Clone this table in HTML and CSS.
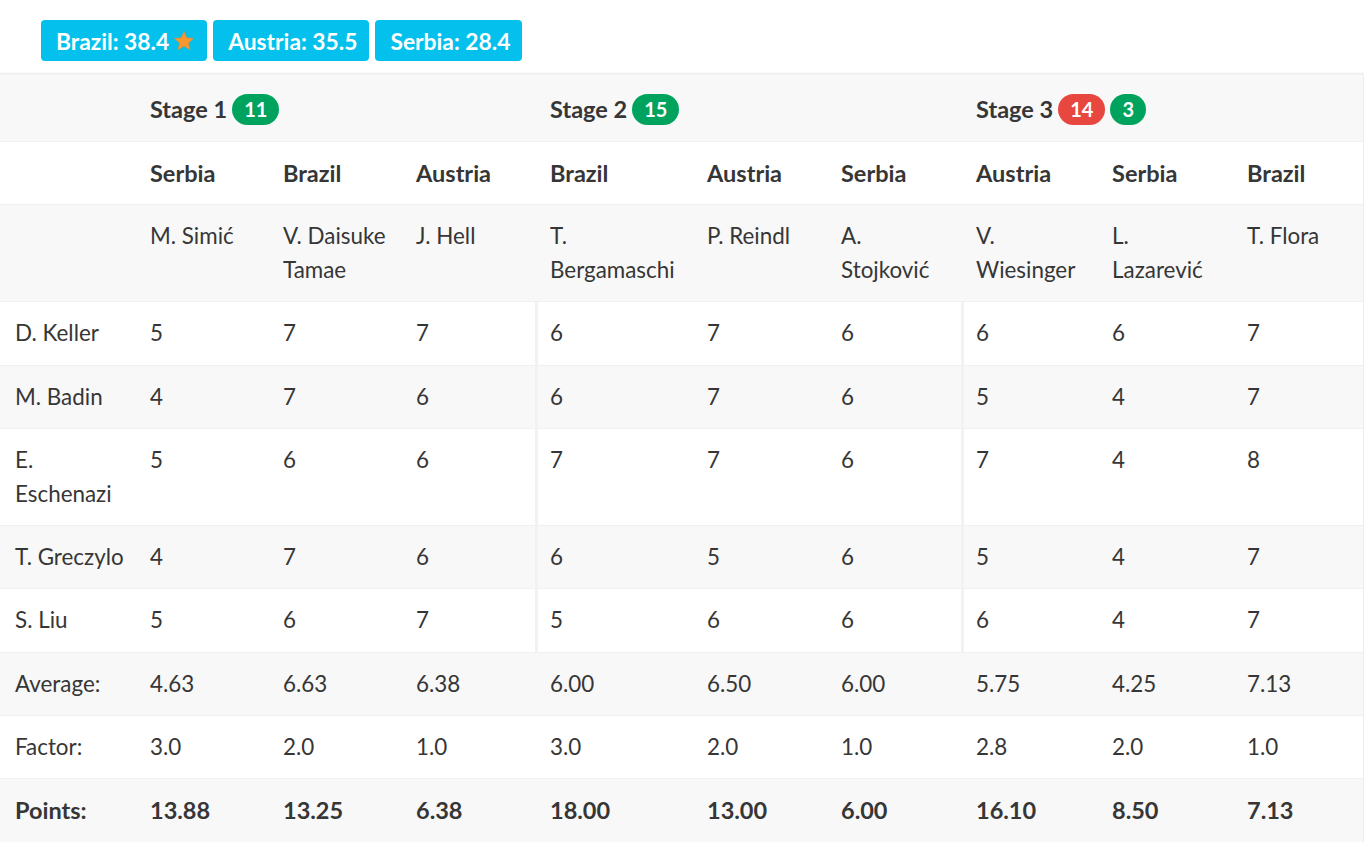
FILE: index.html
```html
<!DOCTYPE html>
<html>
<head>
<meta charset="utf-8">
<link rel="stylesheet" href="styles.css">
</head>
<body>
<div class="page">
  <div class="tags">
    <span class="tag">Brazil: 38.4 <svg class="star" viewBox="0 0 24 24" width="22" height="22"><path d="M12 1.6l3.1 6.9 7.4.7-5.6 5 1.7 7.3L12 17.7l-6.6 3.8 1.7-7.3-5.6-5 7.4-.7z" fill="#f7982f" stroke="#d98a3a" stroke-width="0.6"/></svg></span>
    <span class="tag">Austria: 35.5</span>
    <span class="tag">Serbia: 28.4</span>
  </div>
  <div class="box">
    <table class="scores">
      <colgroup>
        <col class="c135"><col class="c133"><col class="c133"><col class="c134"><col class="c157"><col class="c134"><col class="c135"><col class="c136"><col class="c135"><col class="c131">
      </colgroup>
      <tr class="stage gray">
        <td></td>
        <td colspan="3"><span class="stitle">Stage 1</span><span class="pill green">11</span></td>
        <td colspan="3"><span class="stitle">Stage 2</span><span class="pill green">15</span></td>
        <td colspan="3"><span class="stitle">Stage 3</span><span class="pill red">14</span><span class="pill green">3</span></td>
      </tr>
      <tr class="bold">
        <td></td><td>Serbia</td><td>Brazil</td><td>Austria</td><td>Brazil</td><td>Austria</td><td>Serbia</td><td>Austria</td><td>Serbia</td><td>Brazil</td>
      </tr>
      <tr class="gray">
        <td></td><td>M. Simić</td><td>V. Daisuke<br>Tamae</td><td>J. Hell</td><td>T.<br>Bergamaschi</td><td>P. Reindl</td><td>A.<br>Stojković</td><td>V.<br>Wiesinger</td><td>L.<br>Lazarević</td><td>T. Flora</td>
      </tr>
      <tr class="score">
        <td>D. Keller</td><td>5</td><td>7</td><td>7</td><td class="sep">6</td><td>7</td><td>6</td><td class="sep">6</td><td>6</td><td>7</td>
      </tr>
      <tr class="score gray">
        <td>M. Badin</td><td>4</td><td>7</td><td>6</td><td class="sep">6</td><td>7</td><td>6</td><td class="sep">5</td><td>4</td><td>7</td>
      </tr>
      <tr class="score">
        <td>E.<br>Eschenazi</td><td>5</td><td>6</td><td>6</td><td class="sep">7</td><td>7</td><td>6</td><td class="sep">7</td><td>4</td><td>8</td>
      </tr>
      <tr class="score gray">
        <td>T. Greczylo</td><td>4</td><td>7</td><td>6</td><td class="sep">6</td><td>5</td><td>6</td><td class="sep">5</td><td>4</td><td>7</td>
      </tr>
      <tr class="score">
        <td>S. Liu</td><td>5</td><td>6</td><td>7</td><td class="sep">5</td><td>6</td><td>6</td><td class="sep">6</td><td>4</td><td>7</td>
      </tr>
      <tr class="gray foot">
        <td>Average:</td><td>4.63</td><td>6.63</td><td>6.38</td><td>6.00</td><td>6.50</td><td>6.00</td><td>5.75</td><td>4.25</td><td>7.13</td>
      </tr>
      <tr class="foot">
        <td>Factor:</td><td>3.0</td><td>2.0</td><td>1.0</td><td>3.0</td><td>2.0</td><td>1.0</td><td>2.8</td><td>2.0</td><td>1.0</td>
      </tr>
      <tr class="gray bold foot last">
        <td>Points:</td><td>13.88</td><td>13.25</td><td>6.38</td><td>18.00</td><td>13.00</td><td>6.00</td><td>16.10</td><td>8.50</td><td>7.13</td>
      </tr>
    </table>
  </div>
</div>
</body>
</html>
```
FILE: styles.css
```css
html, body {
  margin: 0;
  padding: 0;
  background: #ffffff;
}
body {
  font-family: Lato, "Noto Sans", sans-serif;
  color: #363636;
  font-size: 22.4px;
}
.page {
  width: 1364px;
}
.tags {
  display: flex;
  gap: 6px;
  padding: 20px 0 0 41px;
  height: 41px;
  margin-bottom: 12px;
}
.tag {
  display: inline-flex;
  align-items: center;
  gap: 4px;
  height: 41px;
  padding: 0 12px 0 15px;
  background: #03c1ec;
  color: #ffffff;
  font-weight: 700;
  font-size: 22.8px;
  border-radius: 4px;
  box-sizing: border-box;
}
.star {
  display: block;
}
.box {
  width: 1363px;
  border-top: 2px solid #f1f1f1;
  box-shadow: 0 2px 3px rgba(10, 10, 10, 0.1), 1px 0 2px rgba(10, 10, 10, 0.06);
}
.scores {
  width: 1363px;
  table-layout: fixed;
  border-collapse: separate;
  border-spacing: 0;
}
.c135 { width: 135px; }
.c133 { width: 133px; }
.c134 { width: 134px; }
.c157 { width: 157px; }
.c136 { width: 136px; }
.c131 { width: 131px; }
.scores td {
  padding: 14px 15px;
  line-height: 34px;
  vertical-align: top;
  text-align: left;
  border-bottom: 1px solid #f0f0f0;
  white-space: nowrap;
}
.scores tr.score td,
.scores tr.foot td {
  padding-bottom: 14.25px;
}
.scores tr.last td {
  border-bottom: 0;
  padding-bottom: 15.25px;
}
.gray td {
  background: #f8f8f8;
}
.bold td {
  font-weight: 700;
  font-size: 23.5px;
}
.stage td {
  padding-top: 15px;
  padding-bottom: 15px;
}
.stitle {
  font-weight: 700;
  font-size: 23.5px;
  vertical-align: middle;
}
.pill {
  display: inline-block;
  vertical-align: middle;
  height: 31px;
  line-height: 31px;
  min-width: 35px;
  padding: 0 12px;
  box-sizing: border-box;
  border-radius: 16px;
  color: #ffffff;
  font-weight: 700;
  font-size: 20px;
  text-align: center;
  margin-left: 5px;
}
.green { background: #00a35e; }
.red { background: #e8473f; }
.score td.sep {
  border-left: 3px solid #f2f2f2;
  padding-left: 12px;
}
```
